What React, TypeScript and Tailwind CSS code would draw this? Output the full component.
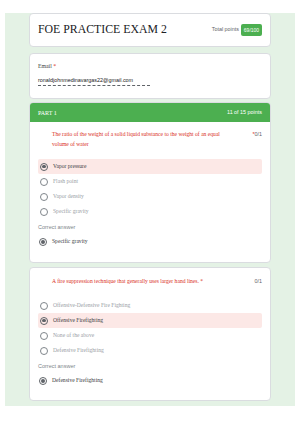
import React from "react";

const serif = "font-['Liberation_Serif',serif]";
const sans = "font-['Liberation_Sans',Arial,sans-serif]";

function Radio({ checked }: { checked?: boolean }) {
  return checked ? (
    <span className="flex h-[8px] w-[8px] shrink-0 items-center justify-center rounded-full border-[1.5px] border-[#5f6368]">
      <span className="h-[3.5px] w-[3.5px] rounded-full bg-[#5f6368]" />
    </span>
  ) : (
    <span className="h-[8px] w-[8px] shrink-0 rounded-full border-[1.2px] border-[#80868b]" />
  );
}

function Option({ label, selected }: { label: string; selected?: boolean }) {
  return (
    <div
      className={
        "flex h-[15px] items-center gap-[5px] rounded-[2px] pl-[2px] " +
        (selected ? "bg-[#fce8e6]" : "")
      }
    >
      <Radio checked={selected} />
      <span
        className={
          serif +
          " text-[5.6px] leading-none " +
          (selected ? "text-[#3c4043]" : "text-[#9aa0a6]")
        }
      >
        {label}
      </span>
    </div>
  );
}

function Correct({ label }: { label: string }) {
  return (
    <>
      <div className={sans + " mt-[2px] flex h-[14px] items-center text-[5.5px] leading-none text-[#80868b]"}>
        Correct answer
      </div>
      <div className="flex h-[14px] items-center gap-[5px] pl-[1px]">
        <Radio checked />
        <span className={serif + " text-[5.6px] leading-none text-[#3c4043]"}>{label}</span>
      </div>
    </>
  );
}

export default function App() {
  return (
    <div className="h-[425px] w-[300px] bg-white pt-[13px]">
      <div className="mx-[5px] flex w-[290px] flex-col bg-[#e4f2e5] px-[24px] pb-[5px]">
        {/* Title card */}
        <div className="flex h-[34px] items-center justify-between rounded-[4px] border border-[#dadce0] bg-white pl-[8px] pr-[8px]">
          <span className={serif + " text-[11.8px] leading-none text-[#202124]"}>FOE PRACTICE EXAM 2</span>
          <div className="flex items-center gap-[2px]">
            <span className={sans + " text-[5.4px] leading-none text-[#5f6368]"}>Total points</span>
            <span
              className={
                sans +
                " flex h-[12px] w-[21px] items-center justify-center rounded-[2px] bg-[#4caf50] text-[5px] leading-none text-white"
              }
            >
              69/100
            </span>
          </div>
        </div>

        {/* Email card */}
        <div className="mt-[6px] flex h-[46px] flex-col rounded-[4px] border border-[#dadce0] bg-white pl-[8px] pt-[9px]">
          <div className={serif + " text-[5.8px] leading-[7px] text-[#3c4043]"}>
            Email <span className="text-[#d93025]">*</span>
          </div>
          <div className={sans + " mt-[7px] w-[112px] border-b border-dashed border-[#5f6368] pb-[1px] text-[5.4px] leading-[7px] text-[#202124]"}>
            ronaldjohnmedinavargas22@gmail.com
          </div>
        </div>

        {/* Part 1 card */}
        <div className="mt-[3px] flex flex-col overflow-hidden rounded-[4px] border border-[#dadce0] bg-white">
          <div className="flex h-[19px] items-center justify-between bg-[#4caf50] pl-[8px] pr-[8px]">
            <span className={serif + " text-[6px] leading-none text-white"}>PART 1</span>
            <span className={sans + " text-[5.4px] leading-none text-white"}>11 of 15 points</span>
          </div>
          <div className="flex flex-col px-[8px] pb-[13px] pt-[7px]">
            <div className="flex items-start justify-between pl-[14px]">
              <div className={serif + " w-[185px] text-[5.6px] leading-[10px] text-[#d93025]"}>
                The ratio of the weight of a solid liquid substance to the weight of an equal volume of water
              </div>
              <span className={sans + " text-[5.4px] leading-[10px] text-[#5f6368]"}>
                <span className="text-[#d93025]">*</span>0/1
              </span>
            </div>
            <div className="mt-[10px] flex flex-col">
              <Option label="Vapor pressure" selected />
              <Option label="Flash point" />
              <Option label="Vapor density" />
              <Option label="Specific gravity" />
            </div>
            <Correct label="Specific gravity" />
          </div>
        </div>

        {/* Question 2 card */}
        <div className="mt-[4px] flex flex-col rounded-[4px] border border-[#dadce0] bg-white px-[8px] pb-[12px] pt-[8px]">
          <div className="flex items-start justify-between pl-[14px]">
            <div className={serif + " text-[5.6px] leading-[10px] text-[#d93025]"}>
              A fire suppression technique that generally uses larger hand lines. <span>*</span>
            </div>
            <span className={sans + " text-[5.4px] leading-[10px] text-[#5f6368]"}>0/1</span>
          </div>
          <div className="mt-[12px] flex flex-col">
            <Option label="Offensive-Defensive Fire Fighting" />
            <Option label="Offensive Firefighting" selected />
            <Option label="None of the above" />
            <Option label="Defensive Firefighting" />
          </div>
          <Correct label="Defensive Firefighting" />
        </div>
      </div>
    </div>
  );
}
